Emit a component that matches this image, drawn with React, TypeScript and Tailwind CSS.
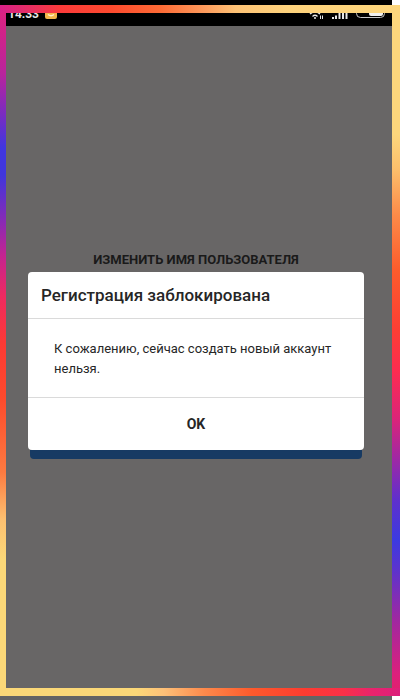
export default function App() {
    return (
        <div className="min-h-screen flex flex-col bg-white font-['Roboto','Noto_Sans',sans-serif]">
            <div className="h-[5px] mr-2 bg-black"></div>

            {/* Gradient frame around the phone screen */}
            <div className="flex-1 flex flex-col">
                <div className="h-2 bg-[linear-gradient(90deg,#d9208a_0%,#e02a70_5%,#fb3a3a_15%,#fd4a2e_28%,#fd6a35_40%,#fd9a5c_51%,#fdc275_59%,#fdd27c_72%,#fdd67c_100%)]"></div>
                <div className="flex-1 flex">
                    <div className="w-1.5 bg-[linear-gradient(180deg,#dc2280_0%,#b8249c_9%,#7a2cc0_15%,#4036e0_20%,#4036dc_24%,#8a2ab4_31%,#c42490_36%,#ee2a60_42%,#fd3a34_49%,#fd4a2c_57%,#fd7a40_68%,#fdc070_75%,#fbd878_81%,#fbd878_100%)]"></div>
                    <PhoneScreen />
                    <div className="w-2 bg-[linear-gradient(180deg,#fdd67c_0%,#fdd67c_18%,#fdc06c_23%,#fd8a48_30%,#fd5c2c_38%,#fd3e34_47%,#fd2c50_53%,#dc2478_60%,#a028a4_66%,#6030cc_72%,#3c3ae0_78%,#5834d0_82%,#a028a0_90%,#dc207c_98%,#e02070_100%)]"></div>
                </div>
                <div className="h-2 bg-[linear-gradient(90deg,#fbd878_0%,#fbd878_34%,#fdc078_41%,#fd8a4c_51%,#fd5a2c_63%,#fd3c30_76%,#fa3048_86%,#e8246c_93%,#dc207c_100%)]"></div>
            </div>

            <div className="h-1 mr-2 bg-[#646464]"></div>
        </div>
    );
}

function PhoneScreen() {
    return (
        <main className="flex-1 min-w-0 flex flex-col bg-[#686666]">
            <StatusBar />
            <div className="flex-1 flex flex-col justify-center px-[22px] pr-7 pb-1.5">
                <h1 className="text-center text-[13px] leading-5 mb-0.5 font-bold text-[#1a1a1a]">ИЗМЕНИТЬ ИМЯ ПОЛЬЗОВАТЕЛЯ</h1>
                <div role="alertdialog" aria-labelledby="title" aria-describedby="message" className="bg-white rounded-[4px] text-[#262626]">
                    <h2 id="title" className="px-[13px] py-3 text-[17px] leading-[22px] font-medium border-b border-[#dadada]">Регистрация заблокирована</h2>
                    <p id="message" className="px-[26px] pt-5 pb-[18px] text-[13px] leading-5">К сожалению, сейчас создать новый аккаунт нельзя.</p>
                    <button type="button" className="w-full h-[53px] border-t border-[#dadada] text-sm font-bold">OK</button>
                </div>
                {/* Edge of the button under the dialog */}
                <div className="h-[9px] mx-0.5 bg-[#173a63] rounded-b-[4px]"></div>
            </div>
        </main>
    );
}

function StatusBar() {
    return (
        <div className="h-[13px] px-0.5 pr-1.5 bg-black overflow-hidden flex items-end justify-between text-[#e8e8e8]">
            <div className="flex items-end gap-1.5 pb-[7px]">
                <span className="text-xs leading-[10px] font-bold">14:33</span>
                <svg width="12" height="12" viewBox="0 0 12 12" aria-hidden="true">
                    <rect width="12" height="12" rx="2" fill="#f3b54a" />
                    <path d="M3 7.5Q6 10 9 7.5" fill="none" stroke="#fff0cc" strokeWidth="1.5" />
                </svg>
            </div>
            <div className="flex items-end gap-2 pb-[7px]">
                <svg width="15" height="12" viewBox="0 0 15 12" fill="none" stroke="currentColor" aria-hidden="true">
                    <path d="M1 7Q6 2.5 11 7M3.5 9.5Q6 7 8.5 9.5" strokeWidth="1.4" />
                    <circle cx="6" cy="11" r="1" fill="currentColor" stroke="none" />
                    <path d="M11.5 8.5V12M13.5 8.5V12" strokeWidth="1" />
                </svg>
                <svg width="16" height="12" viewBox="0 0 16 12" fill="currentColor" aria-hidden="true">
                    <path d="M0 10h2v2H0zM3 8.5h2V12H3zM6.5 6h2v6h-2zM10 4h2v8h-2zM13.5 1h2v11h-2z" />
                </svg>
                <svg width="30" height="12" viewBox="0 0 30 12" fill="none" aria-hidden="true">
                    <rect x=".5" y="-.5" width="28" height="11" rx="4" stroke="#c8c8c8" />
                    <rect x="13" y="1" width="14" height="8" rx="2" fill="#f0f0f0" />
                </svg>
            </div>
        </div>
    );
}
